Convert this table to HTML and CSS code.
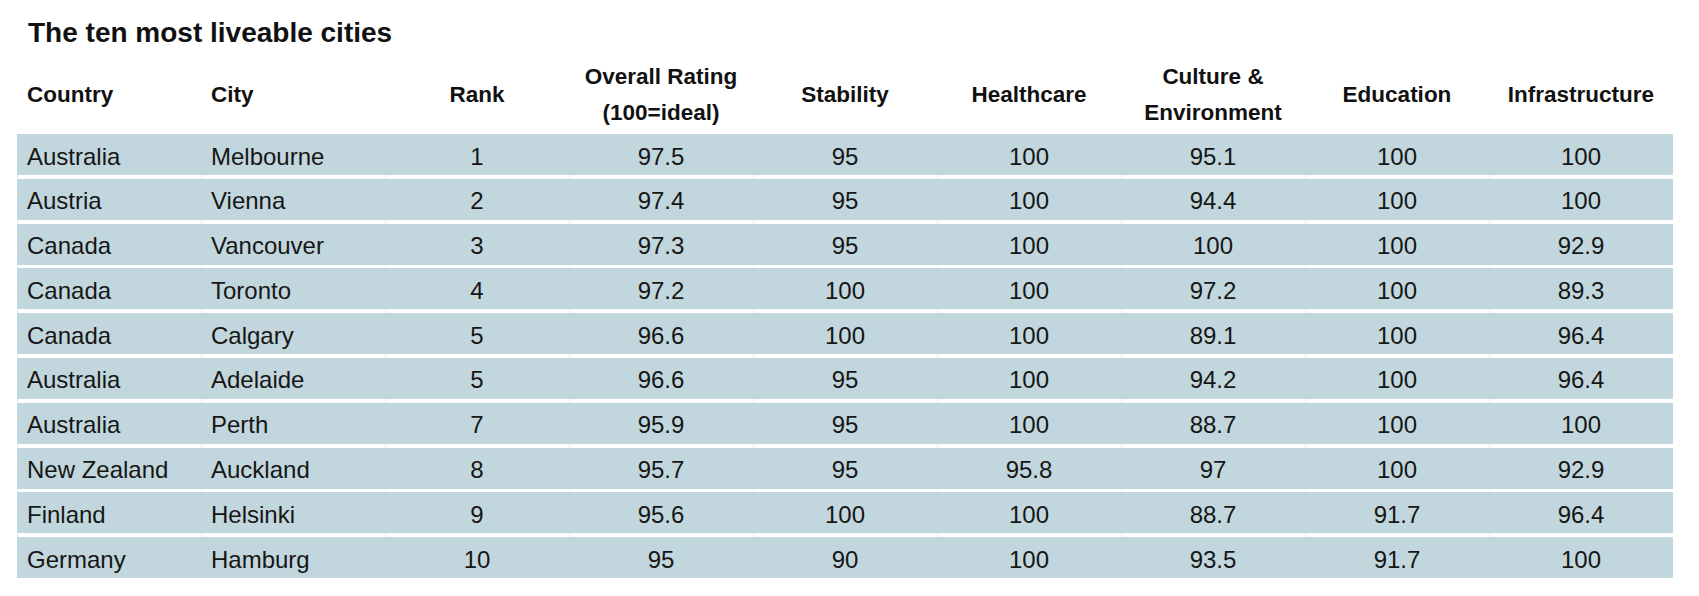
FILE: index.html
```html
<!DOCTYPE html>
<html lang="en">
<head>
<meta charset="utf-8">
<title>The ten most liveable cities</title>
<link rel="stylesheet" href="styles.css">
</head>
<body>
<main class="page">
  <h1 class="title">The ten most liveable cities</h1>
  <div class="table">
    <div class="head">
      <div class="hc text">Country</div>
      <div class="hc text">City</div>
      <div class="hc num">Rank</div>
      <div class="hc num two">Overall Rating<br>(100=ideal)</div>
      <div class="hc num">Stability</div>
      <div class="hc num">Healthcare</div>
      <div class="hc num two">Culture &amp;<br>Environment</div>
      <div class="hc num">Education</div>
      <div class="hc num">Infrastructure</div>
    </div>
    <div class="rows">
      <div class="row"><div class="c text">Australia</div><div class="c text">Melbourne</div><div class="c num">1</div><div class="c num">97.5</div><div class="c num">95</div><div class="c num">100</div><div class="c num">95.1</div><div class="c num">100</div><div class="c num">100</div></div>
      <div class="row"><div class="c text">Austria</div><div class="c text">Vienna</div><div class="c num">2</div><div class="c num">97.4</div><div class="c num">95</div><div class="c num">100</div><div class="c num">94.4</div><div class="c num">100</div><div class="c num">100</div></div>
      <div class="row"><div class="c text">Canada</div><div class="c text">Vancouver</div><div class="c num">3</div><div class="c num">97.3</div><div class="c num">95</div><div class="c num">100</div><div class="c num">100</div><div class="c num">100</div><div class="c num">92.9</div></div>
      <div class="row"><div class="c text">Canada</div><div class="c text">Toronto</div><div class="c num">4</div><div class="c num">97.2</div><div class="c num">100</div><div class="c num">100</div><div class="c num">97.2</div><div class="c num">100</div><div class="c num">89.3</div></div>
      <div class="row"><div class="c text">Canada</div><div class="c text">Calgary</div><div class="c num">5</div><div class="c num">96.6</div><div class="c num">100</div><div class="c num">100</div><div class="c num">89.1</div><div class="c num">100</div><div class="c num">96.4</div></div>
      <div class="row"><div class="c text">Australia</div><div class="c text">Adelaide</div><div class="c num">5</div><div class="c num">96.6</div><div class="c num">95</div><div class="c num">100</div><div class="c num">94.2</div><div class="c num">100</div><div class="c num">96.4</div></div>
      <div class="row"><div class="c text">Australia</div><div class="c text">Perth</div><div class="c num">7</div><div class="c num">95.9</div><div class="c num">95</div><div class="c num">100</div><div class="c num">88.7</div><div class="c num">100</div><div class="c num">100</div></div>
      <div class="row"><div class="c text">New Zealand</div><div class="c text">Auckland</div><div class="c num">8</div><div class="c num">95.7</div><div class="c num">95</div><div class="c num">95.8</div><div class="c num">97</div><div class="c num">100</div><div class="c num">92.9</div></div>
      <div class="row"><div class="c text">Finland</div><div class="c text">Helsinki</div><div class="c num">9</div><div class="c num">95.6</div><div class="c num">100</div><div class="c num">100</div><div class="c num">88.7</div><div class="c num">91.7</div><div class="c num">96.4</div></div>
      <div class="row"><div class="c text">Germany</div><div class="c text">Hamburg</div><div class="c num">10</div><div class="c num">95</div><div class="c num">90</div><div class="c num">100</div><div class="c num">93.5</div><div class="c num">91.7</div><div class="c num">100</div></div>
    </div>
  </div>
</main>
</body>
</html>
```

FILE: styles.css
```css
html, body {
  margin: 0;
  padding: 0;
  background: #ffffff;
}

body {
  font-family: "Liberation Sans", Arial, sans-serif;
  color: #161616;
}

.page {
  padding: 16px 0 0 17px;
}

.title {
  margin: 0;
  padding-left: 11px;
  font-size: 28px;
  line-height: 34px;
  font-weight: bold;
  color: #111111;
}

.table {
  width: 1656px;
}

.head {
  display: grid;
  grid-template-columns: repeat(9, 184px);
  height: 84px;
  align-items: center;
}

.hc {
  font-size: 22.5px;
  font-weight: bold;
  line-height: 36px;
  padding-top: 5px;
  color: #111111;
}

.rows {
  display: flex;
  flex-direction: column;
  gap: 3.8px;
  background-image: linear-gradient(to right, #ececec 1px, transparent 1px);
  background-size: 184px 100%;
}

.row {
  display: grid;
  grid-template-columns: repeat(9, 184px);
  height: 41px;
  background: #c2d6dd;
}

.c {
  display: flex;
  align-items: center;
  padding-top: 4px;
  font-size: 24px;
  line-height: 28px;
  white-space: nowrap;
}

.text {
  padding-left: 10px;
  text-align: left;
}

.c.num {
  justify-content: center;
}

.hc.num {
  text-align: center;
}
```
